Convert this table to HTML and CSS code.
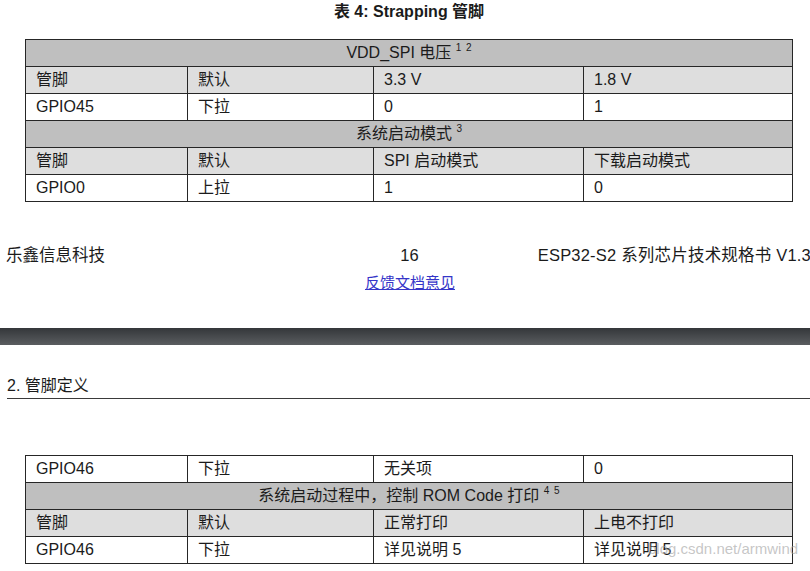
FILE: index.html
```html
<!DOCTYPE html>
<html>
<head>
<meta charset="utf-8">
<link rel="stylesheet" href="styles.css">
</head>
<body>
<div class="page page-one">
  <div class="caption">表 4: Strapping 管脚</div>
  <table class="grid">
    <colgroup><col class="c1"><col class="c2"><col class="c3"><col class="c4"></colgroup>
    <tr class="head"><td colspan="4">VDD_SPI 电压 <sup>1&nbsp;2</sup></td></tr>
    <tr class="label"><td>管脚</td><td>默认</td><td>3.3 V</td><td>1.8 V</td></tr>
    <tr class="data"><td>GPIO45</td><td>下拉</td><td>0</td><td>1</td></tr>
    <tr class="head"><td colspan="4">系统启动模式 <sup>3</sup></td></tr>
    <tr class="label"><td>管脚</td><td>默认</td><td>SPI 启动模式</td><td>下载启动模式</td></tr>
    <tr class="data"><td>GPIO0</td><td>上拉</td><td>1</td><td>0</td></tr>
  </table>
  <div class="footer">
    <span class="f-left">乐鑫信息科技</span>
    <span class="f-mid">16</span>
    <span class="f-right">ESP32-S2 系列芯片技术规格书 V1.3</span>
  </div>
  <div class="feedback"><a href="#">反馈文档意见</a></div>
</div>
<div class="gap"></div>
<div class="page page-two">
  <div class="section">2. 管脚定义</div>
  <div class="table-wrap">
    <table class="grid">
      <colgroup><col class="c1"><col class="c2"><col class="c3"><col class="c4"></colgroup>
      <tr class="data"><td>GPIO46</td><td>下拉</td><td>无关项</td><td>0</td></tr>
      <tr class="head"><td colspan="4">系统启动过程中，控制 ROM Code 打印 <sup>4&nbsp;5</sup></td></tr>
      <tr class="label"><td>管脚</td><td>默认</td><td>正常打印</td><td>上电不打印</td></tr>
      <tr class="data"><td>GPIO46</td><td>下拉</td><td>详见说明 5</td><td>详见说明 5</td></tr>
    </table>
    <div class="watermark">blog.csdn.net/armwind</div>
  </div>
</div>
</body>
</html>
```
FILE: styles.css
```css
html, body {
  margin: 0;
  padding: 0;
  background: #ffffff;
  overflow: hidden;
}
body {
  width: 810px;
  height: 571px;
  font-family: "Liberation Sans", "Noto Sans CJK SC", sans-serif;
  font-size: 16px;
  color: #1b1b1b;
}
.page {
  margin-left: 6px;
  width: 805px;
}
.page-one {
  height: 328px;
  overflow: hidden;
}
.caption {
  text-align: center;
  font-weight: bold;
  font-size: 16px;
  line-height: 24px;
  height: 24px;
  margin-left: 1px;
}
.grid {
  border-collapse: collapse;
  table-layout: fixed;
  width: 768px;
  margin-left: 19px;
}
.page-one .grid {
  margin-top: 15px;
}
.c1 { width: 162px; }
.c2 { width: 186px; }
.c3 { width: 210px; }
.c4 { width: 209px; }
.grid td {
  border: 1px solid #262626;
  height: 26px;
  padding: 0 0 0 10px;
  line-height: 20px;
  vertical-align: middle;
  white-space: nowrap;
}
.grid tr.head td {
  background: #bfbfbf;
  text-align: center;
  padding: 0;
}
.grid tr.label td {
  background: #dedede;
}
.grid tr.data td {
  background: #ffffff;
}
sup {
  font-size: 10px;
  line-height: 0;
  vertical-align: 7px;
  word-spacing: 2px;
}
.footer {
  margin-top: 43px;
  display: grid;
  grid-template-columns: 1fr auto 1fr;
  line-height: 20px;
  font-size: 16.5px;
}
.f-left { justify-self: start; }
.f-mid { justify-self: center; padding-left: 2px; }
.f-right { justify-self: end; white-space: nowrap; letter-spacing: 0.2px; }
.feedback {
  margin-top: 8px;
  text-align: center;
  line-height: 20px;
  font-size: 15px;
  margin-left: 3px;
}
.feedback a {
  color: #3535c8;
  text-decoration: underline;
}
.gap {
  height: 17px;
  background: linear-gradient(#34373a, #5a5d60);
}
.section {
  margin-top: 31px;
  line-height: 20px;
  padding-bottom: 2px;
  border-bottom: 1px solid #3a3a3a;
  margin-left: 1px;
  font-size: 16px;
}
.table-wrap {
  position: relative;
  margin-top: 56px;
}
.watermark {
  position: absolute;
  left: 642px;
  top: 84px;
  font-size: 15px;
  line-height: 20px;
  color: rgba(160, 160, 160, 0.6);
  white-space: nowrap;
}
```
